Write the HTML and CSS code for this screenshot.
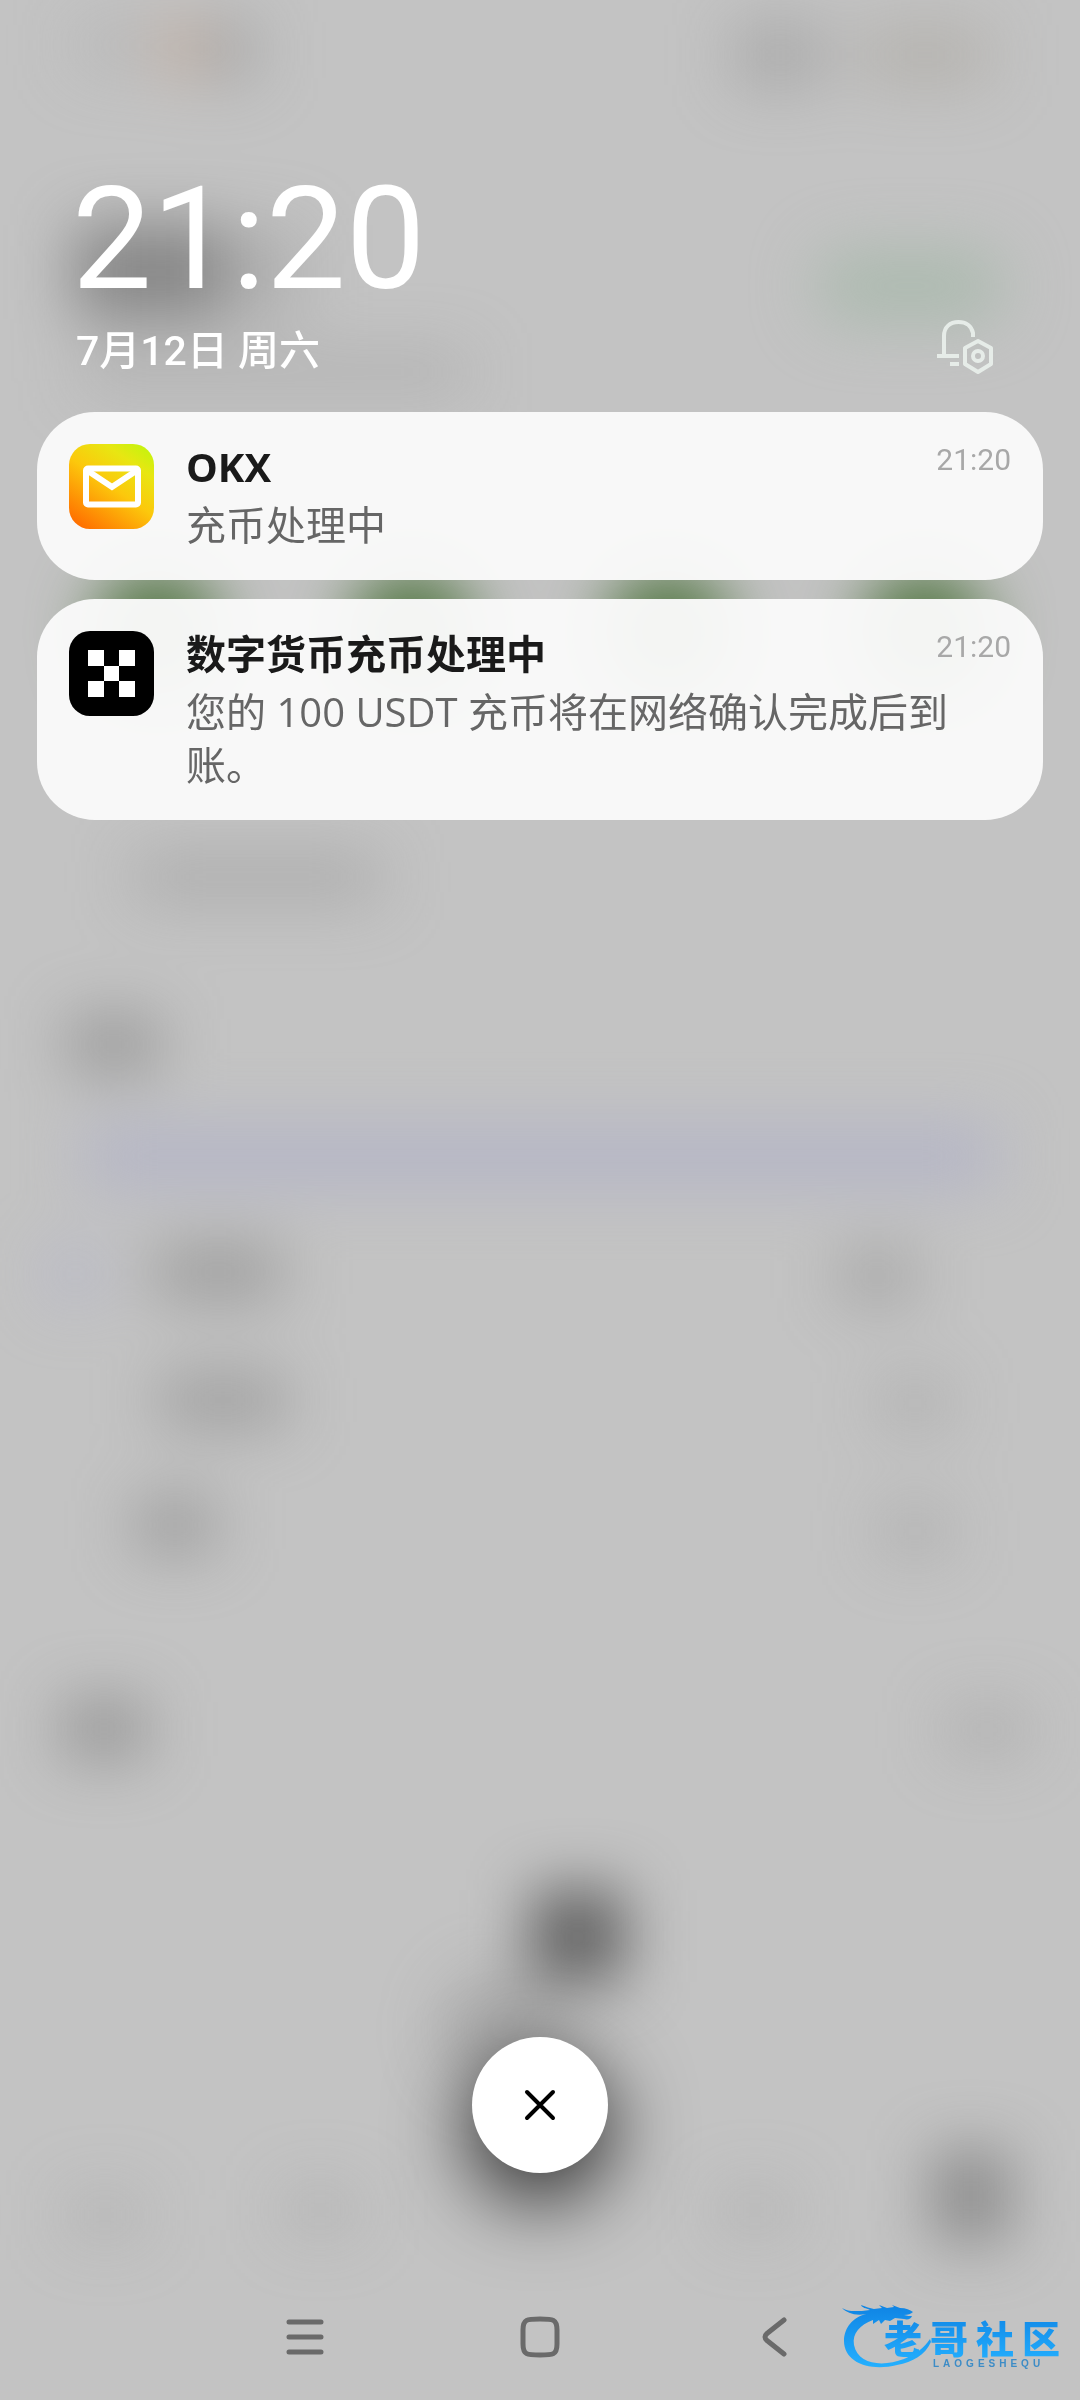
FILE: index.html
```html
<!DOCTYPE html>
<html lang="zh-CN">
<head>
<meta charset="utf-8">
<meta name="viewport" content="width=device-width, initial-scale=1">
<title>通知中心</title>
<link rel="stylesheet" href="styles.css">
</head>
<body>
<div class="shade">
  <svg class="backdrop" viewBox="0 0 1080 2400" preserveAspectRatio="none" aria-hidden="true">
    <defs>
      <filter id="soft" x="0" y="0" width="1080" height="2400" filterUnits="userSpaceOnUse" color-interpolation-filters="sRGB"><feGaussianBlur stdDeviation="31"/></filter>
    </defs>
    <g filter="url(#soft)">
      <rect x="75" y="20" width="90" height="50" fill="#aaa" opacity=".4"/>
      <rect x="165" y="20" width="36" height="56" fill="#d0a080" opacity=".5"/>
      <rect x="205" y="20" width="50" height="60" fill="#888" opacity=".5"/>
      <rect x="735" y="24" width="90" height="62" fill="#909090" opacity=".5"/>
      <rect x="860" y="24" width="130" height="62" fill="#a09c90" opacity=".4"/>
      <rect x="75" y="225" width="150" height="94" fill="#666" opacity=".65"/>
      <rect x="225" y="225" width="80" height="94" fill="#888" opacity=".3"/>
      <rect x="80" y="352" width="390" height="40" fill="#999" opacity=".4"/>
      <rect x="815" y="250" width="190" height="72" rx="36" fill="#a6b8aa" opacity=".8"/>
      <circle cx="157" cy="632" r="64" fill="#507540" opacity=".95"/>
      <circle cx="412" cy="632" r="64" fill="#507540" opacity=".95"/>
      <circle cx="668" cy="632" r="64" fill="#507540" opacity=".95"/>
      <circle cx="924" cy="632" r="64" fill="#507540" opacity=".95"/>
      <rect x="135" y="854" width="245" height="46" fill="#999" opacity=".55"/>
      <rect x="68" y="1016" width="92" height="56" fill="#777" opacity=".55"/>
      <rect x="84" y="1126" width="912" height="60" fill="#b4b5c6"/>
      <rect x="45" y="1246" width="60" height="56" fill="#b0b2cc" opacity=".5"/>
      <rect x="155" y="1246" width="126" height="52" fill="#808080" opacity=".6"/>
      <rect x="840" y="1250" width="74" height="52" fill="#808080" opacity=".45"/>
      <rect x="160" y="1374" width="126" height="52" fill="#808080" opacity=".55"/>
      <rect x="880" y="1378" width="70" height="50" fill="#999" opacity=".45"/>
      <rect x="136" y="1498" width="78" height="54" fill="#808080" opacity=".6"/>
      <rect x="880" y="1506" width="70" height="50" fill="#999" opacity=".45"/>
      <rect x="62" y="1700" width="84" height="58" fill="#777" opacity=".6"/>
      <rect x="945" y="1706" width="84" height="48" fill="#999" opacity=".45"/>
      <rect x="532" y="1890" width="92" height="92" fill="#3c3c3c" opacity=".74"/>
      <circle cx="500" cy="2030" r="60" fill="#777" opacity=".3"/>
      <rect x="932" y="2150" width="78" height="92" fill="#666" opacity=".6"/>
      <rect x="65" y="2190" width="80" height="50" fill="#999" opacity=".3"/>
      <rect x="280" y="2185" width="80" height="50" fill="#999" opacity=".3"/>
      <rect x="715" y="2185" width="80" height="50" fill="#999" opacity=".3"/>
    </g>
  </svg>

  <header class="header">
    <div>
      <time class="clock" datetime="21:20">21:20</time>
      <p class="date">7月12日 周六</p>
    </div>
    <button class="settings" type="button" aria-label="通知设置">
      <svg viewBox="0 0 58 56" width="58" height="56" fill="none" stroke="currentColor" stroke-width="4">
        <path d="M1 37h22M14 45h9M8 36V17C8 8 14 3 22.500 3 30 3 35.500 7 37 14v4"/>
        <path stroke-linejoin="round" d="M42 22l13 7v16l-13 8-13-8V29z"/>
        <circle cx="42" cy="37" r="5"/>
      </svg>
    </button>
  </header>

  <main class="list">
    <article class="card">
      <svg class="icon" viewBox="0 0 85 85" role="img" aria-label="邮件">
        <defs>
          <linearGradient id="mail" x1="0.150" y1="1" x2="0.850" y2="0">
            <stop offset="0" stop-color="#ff6d00"/>
            <stop offset=".5" stop-color="#fcc80c"/>
            <stop offset=".8" stop-color="#e8e612"/>
            <stop offset="1" stop-color="#c6f30e"/>
          </linearGradient>
        </defs>
        <rect width="85" height="85" rx="21" fill="url(#mail)"/>
        <rect x="17" y="24.500" width="52" height="36" rx="2" fill="none" stroke="#fff" stroke-width="6"/>
        <path d="M19 27l24 16 24-16" fill="none" stroke="#fff" stroke-width="6"/>
      </svg>
      <div class="content">
        <div class="heading">
          <h2 class="title">OKX</h2>
          <time class="time" datetime="21:20">21:20</time>
        </div>
        <p class="text">充币处理中</p>
      </div>
    </article>

    <article class="card">
      <svg class="icon" viewBox="0 0 85 85" role="img" aria-label="OKX">
        <rect width="85" height="85" rx="21"/>
        <path fill="#fff" d="M19 19h16v16H19zM50 19h16v16H50zM35 35h15v15H35zM19 50h16v16H19zM50 50h16v16H50z"/>
      </svg>
      <div class="content">
        <div class="heading">
          <h2 class="title">数字货币充币处理中</h2>
          <time class="time" datetime="21:20">21:20</time>
        </div>
        <p class="text">您的 100 USDT 充币将在网络确认完成后到账。</p>
      </div>
    </article>
  </main>

  <button class="clear" type="button" aria-label="清除全部通知">
    <svg viewBox="0 0 32 32" width="32" height="32" fill="none" stroke="#000" stroke-width="4" stroke-linecap="round"><path d="M3 3l26 26M29 3L3 29"/></svg>
  </button>

  <nav class="nav" aria-label="系统导航">
    <button class="key" type="button" aria-label="最近任务">
      <svg viewBox="0 0 44 44" width="44" height="44"><path d="M6 7h32M6 22h32M6 37h32"/></svg>
    </button>
    <button class="key" type="button" aria-label="主屏幕">
      <svg viewBox="0 0 44 44" width="44" height="44"><path d="M22 4C35 4 39 4 39 15v14c0 11-4 11-17 11S5 40 5 29V15C5 4 9 4 22 4z"/></svg>
    </button>
    <button class="key" type="button" aria-label="返回">
      <svg viewBox="0 0 44 44" width="44" height="44"><path d="M31 5L14 18.500q-4 3.500 0 7L31 39"/></svg>
    </button>
  </nav>

  <svg class="brand" viewBox="0 0 224 72" width="224" height="72" role="img" aria-label="老哥社区">
    <defs>
      <linearGradient id="blue" x1="0" y1="0" x2="0" y2="1">
        <stop offset="0" stop-color="#0f84e4"/>
        <stop offset="1" stop-color="#24b0ff"/>
      </linearGradient>
    </defs>
    <path fill="url(#blue)" d="M0 4c6 4 12 3 20 3l8-1c-4-2-8-2-9-5 5 2 9 3 13 4l8-1-3-3 8 3 7-1-2-2 8 3c6 0 10 2 13 4-2 2-5 3-9 3 3 1 6 1 8 1-1 3-4 4-8 3l-9-1-5 3-5-1-4 4-2-4-6 4v-4c-13 5-21 13-19 25 4 20 29 22 50 14 12-5 20-11 26-20l1 3c-6 13-18 20-34 23C27 68 2 58 2 37 2 24 11 13 24 10 13 12 5 9 0 4z"/>
    <text class="brand-name" x="42" y="49" fill="url(#blue)">老哥社区</text>
    <text class="brand-sub" x="91" y="63">LAOGESHEQU</text>
  </svg>
</div>
</body>
</html>
```
FILE: styles.css
```css
* {
  box-sizing: border-box;
}

body {
  margin: 0;
  background: #c3c3c3;
  color: #1a1a1a;
  font-family: "Open Sans", "Noto Sans CJK SC", sans-serif;
}

h2,
p {
  margin: 0;
}

button {
  display: grid;
  place-items: center;
  padding: 0;
  border: 0;
  background: none;
  color: inherit;
  cursor: pointer;
}

svg {
  display: block;
}

.shade {
  position: relative;
  isolation: isolate;
  display: flex;
  flex-direction: column;
  min-height: 100vh;
  overflow: hidden;
}

.backdrop {
  position: absolute;
  inset: 0;
  z-index: -1;
  width: 100%;
  height: 100%;
}

.header {
  display: flex;
  justify-content: space-between;
  align-items: flex-end;
  padding: 166px 86px 37px 72px;
  color: #fff;
}

.clock {
  display: block;
  font-family: Roboto, sans-serif;
  font-size: 142px;
  line-height: 148px;
}

.date {
  margin: 13px 0 0 4px;
  font-family: Roboto, "Noto Sans CJK SC", sans-serif;
  font-size: 41px;
  font-weight: 500;
  line-height: 48px;
}

.settings {
  color: #e6ece8;
}

.list {
  display: grid;
  gap: 19px;
  padding: 0 37px;
}

.card {
  display: flex;
  align-items: flex-start;
  padding: 32px 32px 29px;
  border-radius: 58px;
  background: rgba(250, 250, 250, 0.96);
}

.icon {
  flex: none;
  width: 85px;
  height: 85px;
}

.content {
  flex: 1;
  min-width: 0;
  margin-left: 32px;
}

.heading {
  display: flex;
  justify-content: space-between;
  align-items: flex-start;
  gap: 24px;
}

.title {
  font-size: 40px;
  font-weight: 700;
  line-height: 45px;
}

.text {
  margin-top: 9px;
  padding-right: 44px;
  color: #666;
  font-size: 40px;
  line-height: 53px;
}

.time {
  color: #a8a8a8;
  font-family: Roboto, sans-serif;
  font-size: 30px;
  line-height: 32px;
}

.clear {
  width: 136px;
  height: 136px;
  margin: auto auto 0;
  border-radius: 50%;
  background: #fff;
  box-shadow: 0 24px 80px 4px rgba(0, 0, 0, 0.75);
}

.nav {
  display: flex;
  justify-content: center;
  gap: 175px;
  padding: 134px 0 33px;
}

.key {
  width: 60px;
  height: 60px;
}

.key svg {
  fill: none;
  stroke: #6a6a6a;
  stroke-width: 5;
  stroke-linecap: round;
}

.brand {
  position: absolute;
  right: 14px;
  bottom: 24px;
}

.brand-name {
  font: 900 38px "Noto Sans CJK SC", sans-serif;
  letter-spacing: 8px;
}

.brand-sub {
  fill: #3d8cc6;
  font: bold 10px "Liberation Sans", sans-serif;
  letter-spacing: 4px;
}
```
